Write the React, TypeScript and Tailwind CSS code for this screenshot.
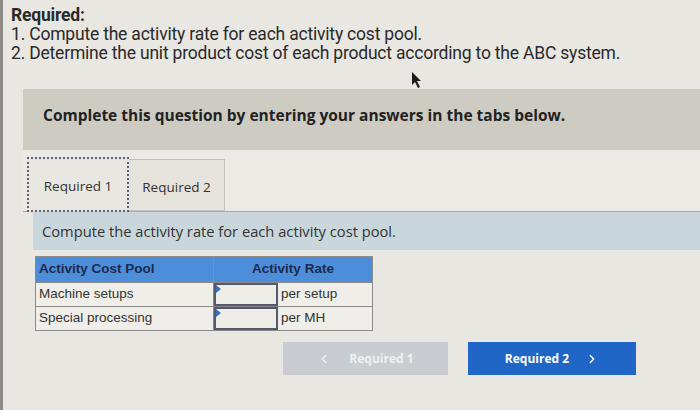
import { ChevronLeft, ChevronRight } from "lucide-react";

const rows = [
  { pool: "Machine setups", unit: "per setup" },
  { pool: "Special processing", unit: "per MH" },
];

export default function App() {
  return (
    <div className="relative w-[700px] h-[410px] overflow-hidden bg-[#e9e7e1] border-l-[3px] border-[#8d8c88] font-['Open_Sans',sans-serif] text-[#2a2a2a]">
      {/* Required list */}
      <div className="pl-[8px] pt-[6px] font-['Roboto',sans-serif] text-[17.5px] leading-[19px] tracking-[-0.2px]">
        <div className="font-bold">Required:</div>
        <div>1. Compute the activity rate for each activity cost pool.</div>
        <div>2. Determine the unit product cost of each product according to the ABC system.</div>
      </div>

      {/* Cursor */}
      <svg className="absolute left-[408px] top-[71px]" width="12" height="18" viewBox="0 0 12 18">
        <path d="M1 1 L1 14 L4 11 L7 17 L9 16 L6 10 L10 10 Z" fill="#1c1c1c" />
      </svg>

      <div className="ml-[20px] mt-[26px]">
        {/* Instruction band */}
        <div className="h-[61px] bg-[#cecbc3] flex items-center pl-[20px] pb-[8px]">
          <span className="text-[15.5px] font-bold text-[#222]">
            Complete this question by entering your answers in the tabs below.
          </span>
        </div>

        {/* Tabs */}
        <div className="bg-[#eceae4] pt-[7px] pl-[4px] flex items-end border-b border-[#a9a9a6]">
          <div className="w-[102px] h-[55px] -mb-px pt-[3px] flex items-center justify-center border-2 border-dotted border-[#5b5d80] bg-[#e9e7e1] text-[13.5px] text-[#333]">
            Required 1
          </div>
          <div className="w-[96px] h-[52px] pt-[4px] flex items-center justify-center border border-l-0 border-[#c3c1bb] bg-[#e5e3dc] text-[13.5px] text-[#333]">
            Required 2
          </div>
        </div>

        {/* Question strip */}
        <div className="ml-[10px] h-[38px] bg-[#c9d7dc] flex items-center pl-[9px] text-[14.7px] text-[#333]">
          Compute the activity rate for each activity cost pool.
        </div>

        {/* Table */}
        <div className="ml-[12px] mt-[6px] w-[338px] font-['Liberation_Sans',sans-serif] text-[13.5px] border border-[#8a8a88]">
          <div className="flex h-[25px] bg-[#4d8edb] font-bold text-[#1d2a4c]">
            <div className="w-[178px] pl-[3px] flex items-center border-r border-[#6e94c4]">Activity Cost Pool</div>
            <div className="flex-1 flex items-center justify-center">Activity Rate</div>
          </div>
          {rows.map((r) => (
            <div key={r.pool} className="flex h-[24px] border-t border-[#8a8a88] bg-[#f0eee9] text-[#333]">
              <div className="w-[178px] pl-[3px] flex items-center border-r border-[#8a8a88]">{r.pool}</div>
              <div className="relative w-[64px] border-2 border-[#55586d] bg-[#efede8]">
                <div className="absolute left-0 top-0 w-0 h-0 border-t-[4px] border-b-[4px] border-l-[5px] border-t-transparent border-b-transparent border-l-[#3a6fc0]" />
              </div>
              <div className="flex-1 pl-[3px] flex items-center">{r.unit}</div>
            </div>
          ))}
        </div>
      </div>

      {/* Nav buttons */}
      <div className="absolute left-[280px] top-[342px] flex gap-[20px] font-['Open_Sans',sans-serif]">
        <div className="w-[165px] h-[33px] bg-[#c9ccd0] flex items-center justify-center gap-[18px] text-[12px] font-bold text-[#eef0f2]">
          <ChevronLeft className="w-[14px] h-[14px]" strokeWidth={2.5} />
          <span>Required 1</span>
        </div>
        <div className="w-[168px] h-[33px] bg-[#1f66c6] flex items-center justify-center gap-[16px] text-[12px] font-bold text-white">
          <span>Required 2</span>
          <ChevronRight className="w-[14px] h-[14px]" strokeWidth={2.5} />
        </div>
      </div>
    </div>
  );
}
